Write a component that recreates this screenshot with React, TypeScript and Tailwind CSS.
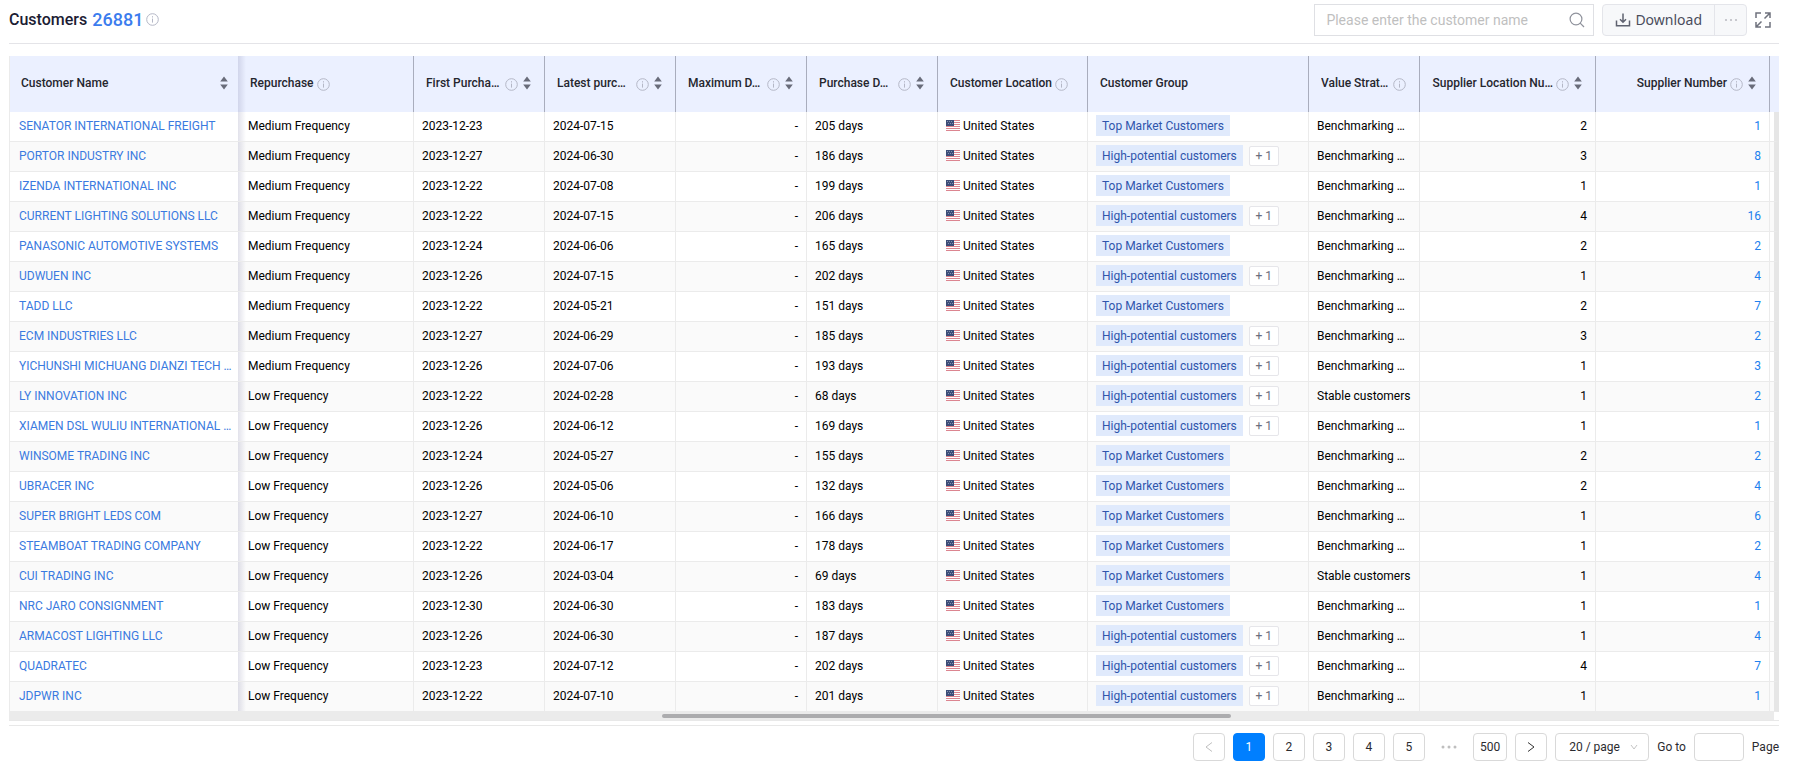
import { useState } from 'react'

type Row = {
  name: string
  freq: 'Medium' | 'Low'
  first: string
  latest: string
  days: number
  high: boolean
  value: string
  locations: number
  suppliers: number
}

const BENCH = 'Benchmarking …'
const STABLE = 'Stable customers'

const r = (
  name: string,
  freq: 'Medium' | 'Low',
  first: string,
  latest: string,
  days: number,
  high: boolean,
  locations: number,
  suppliers: number,
  value: string = BENCH,
): Row => ({ name, freq, first, latest, days, high, value, locations, suppliers })

const rows: Row[] = [
  r('SENATOR INTERNATIONAL FREIGHT', 'Medium', '2023-12-23', '2024-07-15', 205, false, 2, 1),
  r('PORTOR INDUSTRY INC', 'Medium', '2023-12-27', '2024-06-30', 186, true, 3, 8),
  r('IZENDA INTERNATIONAL INC', 'Medium', '2023-12-22', '2024-07-08', 199, false, 1, 1),
  r('CURRENT LIGHTING SOLUTIONS LLC', 'Medium', '2023-12-22', '2024-07-15', 206, true, 4, 16),
  r('PANASONIC AUTOMOTIVE SYSTEMS', 'Medium', '2023-12-24', '2024-06-06', 165, false, 2, 2),
  r('UDWUEN INC', 'Medium', '2023-12-26', '2024-07-15', 202, true, 1, 4),
  r('TADD LLC', 'Medium', '2023-12-22', '2024-05-21', 151, false, 2, 7),
  r('ECM INDUSTRIES LLC', 'Medium', '2023-12-27', '2024-06-29', 185, true, 3, 2),
  r('YICHUNSHI MICHUANG DIANZI TECH …', 'Medium', '2023-12-26', '2024-07-06', 193, true, 1, 3),
  r('LY INNOVATION INC', 'Low', '2023-12-22', '2024-02-28', 68, true, 1, 2, STABLE),
  r('XIAMEN DSL WULIU INTERNATIONAL …', 'Low', '2023-12-26', '2024-06-12', 169, true, 1, 1),
  r('WINSOME TRADING INC', 'Low', '2023-12-24', '2024-05-27', 155, false, 2, 2),
  r('UBRACER INC', 'Low', '2023-12-26', '2024-05-06', 132, false, 2, 4),
  r('SUPER BRIGHT LEDS COM', 'Low', '2023-12-27', '2024-06-10', 166, false, 1, 6),
  r('STEAMBOAT TRADING COMPANY', 'Low', '2023-12-22', '2024-06-17', 178, false, 1, 2),
  r('CUI TRADING INC', 'Low', '2023-12-26', '2024-03-04', 69, false, 1, 4, STABLE),
  r('NRC JARO CONSIGNMENT', 'Low', '2023-12-30', '2024-06-30', 183, false, 1, 1),
  r('ARMACOST LIGHTING LLC', 'Low', '2023-12-26', '2024-06-30', 187, true, 1, 4),
  r('QUADRATEC', 'Low', '2023-12-23', '2024-07-12', 202, true, 4, 7),
  r('JDPWR INC', 'Low', '2023-12-22', '2024-07-10', 201, true, 1, 1),
]

type Column = { title: string; info?: boolean; sort?: boolean; layout: 'fill' | 'start' | 'end' }

const columns: Column[] = [
  { title: 'Repurchase', info: true, layout: 'start' },
  { title: 'First Purcha…', info: true, sort: true, layout: 'fill' },
  { title: 'Latest purc…', info: true, sort: true, layout: 'fill' },
  { title: 'Maximum D…', info: true, sort: true, layout: 'fill' },
  { title: 'Purchase D…', info: true, sort: true, layout: 'fill' },
  { title: 'Customer Location', info: true, layout: 'start' },
  { title: 'Customer Group', layout: 'start' },
  { title: 'Value Strat…', info: true, layout: 'fill' },
  { title: 'Supplier Location Nu…', info: true, sort: true, layout: 'end' },
  { title: 'Supplier Number', info: true, sort: true, layout: 'end' },
]

function InfoIcon() {
  return (
    <svg viewBox="0 0 13 13" className="size-[13px] shrink-0 text-[#b4b7c6]" fill="none" stroke="currentColor" aria-hidden="true">
      <circle cx="6.5" cy="6.5" r="5.8" />
      <path d="M6.5 5.6v4M6.5 3.2v1.3" />
    </svg>
  )
}

function SortButton({ label }: { label: string }) {
  return (
    <button type="button" aria-label={`Sort by ${label}`} className="shrink-0 cursor-pointer">
      <svg viewBox="0 0 8 14" className="h-[14px] w-2 fill-[#696c7a]" aria-hidden="true">
        <path d="M4 0.6 7.8 5.4H0.2ZM4 13.4 0.2 8.6H7.8Z" />
      </svg>
    </button>
  )
}

function Flag() {
  return (
    <svg viewBox="0 0 14 11" className="h-[11px] w-[14px] shrink-0" aria-hidden="true">
      <path fill="#fff" d="M0 0h14v11H0z" />
      <path fill="#dc8590" d="M0 0h14v1H0zM0 2h14v1H0zM0 4h14v1H0zM0 6h14v1H0zM0 8h14v1H0zM0 10h14v1H0z" />
      <path fill="#3c4d78" d="M0 0h8v6H0z" />
      <path fill="#8490ae" d="M1 1h1v1H1zM3 1h1v1H3zM5 1h1v1H5zM2 3h1v1H2zM4 3h1v1H4zM6 3h1v1H6z" />
    </svg>
  )
}

function HeaderCell({ col }: { col: Column }) {
  const fill = col.layout === 'fill'
  return (
    <th scope="col" className="h-14 border-r border-[#a9adbd] bg-[#ebf0ff] pr-[13px] pb-[2px] pl-3 text-left font-medium text-[#25262e]">
      <div className={col.layout === 'end' ? 'flex items-center justify-end' : 'flex items-center'}>
        <span className={fill ? 'min-w-0 flex-1 overflow-hidden whitespace-nowrap' : 'whitespace-nowrap'}>{col.title}</span>
        {col.info && (
          <span className="pt-[2px] pl-[3px]">
            <InfoIcon />
          </span>
        )}
        {col.sort && (
          <span className="flex pl-[5px]">
            <SortButton label={col.title} />
          </span>
        )}
      </div>
    </th>
  )
}

const td = 'h-[30px] border-r border-b border-[#ebebeb] px-2 pb-[2px] whitespace-nowrap'
const fixedEdge =
  "sticky left-0 z-10 after:absolute after:inset-y-0 after:left-full after:w-2 after:bg-linear-to-r after:from-[#3c3c7826] after:to-transparent after:content-['']"
const pageBox = 'flex h-7 min-w-8 cursor-pointer items-center justify-center rounded border px-[6px]'

export default function App() {
  const [page, setPage] = useState(1)
  const [query, setQuery] = useState('')
  return (
    <main className="bg-white pr-4 pl-[9px] font-[Roboto,sans-serif] text-[12px] leading-[18px] text-black">
      <header className="flex h-11 items-center justify-between border-b border-[#e4e4e8] pb-1">
        <div className="flex items-center">
          <h1 className="text-[16px] font-medium text-[#1b1c33]">Customers</h1>
          <span className="pl-[5px] text-[18px] font-medium text-[#3b7cee]">26881</span>
          <span className="pl-[3px]">
            <InfoIcon />
          </span>
        </div>
        <div className="flex items-center gap-2">
          <div className="flex h-8 w-[280px] items-center border border-[#dfe0e4] pr-2 pl-[11px]">
            <input
              type="text"
              aria-label="Customer name"
              value={query}
              onChange={(e) => setQuery(e.target.value)}
              placeholder="Please enter the customer name"
              className="h-7 min-w-0 flex-1 text-[14px] leading-6 outline-none placeholder:text-[#bfbfbf]"
            />
            <svg viewBox="0 0 16 16" className="size-4" fill="none" stroke="#8f929c" strokeWidth="1.2" aria-hidden="true">
              <circle cx="7" cy="7" r="5.9" />
              <path d="m11.2 11.2 3.8 3.8" />
            </svg>
          </div>
          <div className="flex h-8 rounded-sm border border-[#e4e5ea] bg-[#f7f8fa] font-['Noto_Sans',sans-serif]">
            <button type="button" className="flex cursor-pointer items-center gap-1 px-3 text-[14px] text-[#4a4d5c]">
              <svg viewBox="0 0 16 16" className="size-4" fill="none" stroke="#5f6270" strokeWidth="1.5" aria-hidden="true">
                <path d="M1.5 8.500v5.200h13V8.500M8 1.500v8.400M5 7.200 8 10.200l3-3" />
              </svg>
              Download
            </button>
            <button type="button" aria-label="More actions" className="flex w-8 cursor-pointer items-center justify-center border-l border-[#e4e5ea]">
              <svg viewBox="0 0 14 4" className="h-1 w-[14px] fill-[#bcbdc4]" aria-hidden="true">
                <circle cx="2" cy="2" r="1.1" />
                <circle cx="7" cy="2" r="1.1" />
                <circle cx="12" cy="2" r="1.1" />
              </svg>
            </button>
          </div>
          <button type="button" aria-label="Full screen" className="mr-2 cursor-pointer">
            <svg viewBox="0 0 16 16" className="size-4" fill="none" stroke="#6f727d" strokeWidth="1.5" aria-hidden="true">
              <path d="M1 6V1h5M10 15h5v-5M9.5 6.5 15 1M10 1h5v5M6.500 9.500 1 15M1 10v5h5" />
            </svg>
          </button>
        </div>
      </header>

      <section className="pt-3">
        <div className="overflow-x-auto">
          <table className="w-full min-w-[1770px] table-fixed border-separate border-spacing-0 border-l border-[#ebebeb]">
            <colgroup>
              <col className="w-[228px]" />
              <col className="w-[176px]" />
              <col className="w-[131px]" />
              <col className="w-[131px]" />
              <col className="w-[131px]" />
              <col className="w-[131px]" />
              <col className="w-[150px]" />
              <col className="w-[221px]" />
              <col className="w-[111px]" />
              <col className="w-[176px]" />
              <col className="w-[174px]" />
              <col />
            </colgroup>
            <thead>
              <tr>
                <th scope="col" className={`${fixedEdge} h-14 bg-[#ebf0ff] pr-[10px] pb-[2px] pl-[11px] text-left font-medium text-[#25262e]`}>
                  <div className="flex items-center justify-between">
                    Customer Name
                    <SortButton label="Customer Name" />
                  </div>
                </th>
                {columns.map((c) => (
                  <HeaderCell key={c.title} col={c} />
                ))}
                <td className="bg-[#ebf0ff]" />
              </tr>
            </thead>
            <tbody>
              {rows.map((row) => (
                <tr key={row.name} className="bg-white even:bg-[#fafafa]">
                  <td className={`${fixedEdge} h-[30px] border-b border-[#ebebeb] bg-inherit pb-[2px] pl-[9px] whitespace-nowrap`}>
                    <a href="#customer" className="text-[#3a7ae0]">
                      {row.name}
                    </a>
                  </td>
                  <td className="h-[30px] border-r border-b border-[#ebebeb] pb-[2px] pl-[10px] whitespace-nowrap">{row.freq} Frequency</td>
                  <td className={td}>{row.first}</td>
                  <td className={td}>{row.latest}</td>
                  <td className={`${td} text-right`}>-</td>
                  <td className={td}>{row.days} days</td>
                  <td className={td}>
                    <div className="flex items-center gap-[3px]">
                      <Flag />
                      United States
                    </div>
                  </td>
                  <td className={td}>
                    <div className="flex items-center gap-[6px]">
                      <span className="flex h-[21px] items-center bg-[#e0eafc] px-[6px] text-[#2f55ac]">
                        {row.high ? 'High-potential customers' : 'Top Market Customers'}
                      </span>
                      {row.high && (
                        <button type="button" className="flex h-5 w-[30px] cursor-pointer items-center justify-center rounded-xs border border-[#e6e6ea] bg-white text-[#6b6e7d]">
                          + 1
                        </button>
                      )}
                    </div>
                  </td>
                  <td className={td}>{row.value}</td>
                  <td className={`${td} text-right`}>{row.locations}</td>
                  <td className={`${td} text-right`}>
                    <a href="#suppliers" className="text-[#2080ee]">
                      {row.suppliers}
                    </a>
                  </td>
                  <td className="border-r-[5px] border-b border-r-[#e6e6e6] border-b-[#ebebeb]" />
                </tr>
              ))}
            </tbody>
          </table>
        </div>
        <div className="mr-[5px] h-2 bg-[#ebebeb] py-[2px]">
          <div className="ml-[37%] h-1 w-[32.25%] rounded-xs bg-[#acacae]" />
        </div>
        <div className="h-[6px] border-y border-[#e8e8e8]" />
      </section>

      <nav aria-label="Pagination" className="flex items-center justify-end gap-2 pt-[7px] text-[#2b2b2f]">
        <button type="button" aria-label="Previous page" disabled className={`${pageBox} border-[#d9d9d9]`}>
          <svg viewBox="0 0 10 10" className="size-[10px]" fill="none" stroke="#bfbfbf" aria-hidden="true">
            <path d="M8 0.500 2 5l6 4.500" />
          </svg>
        </button>
        {[1, 2, 3, 4, 5].map((n) => (
          <button
            key={n}
            type="button"
            onClick={() => setPage(n)}
            className={page === n ? `${pageBox} border-[#007fff] bg-[#007fff] text-white` : `${pageBox} border-[#d9d9d9]`}
          >
            {n}
          </button>
        ))}
        <span className="flex w-8 justify-center">
          <svg viewBox="0 0 16 4" className="h-1 w-4 fill-[#bfbfbf]" aria-hidden="true">
            <circle cx="2" cy="2" r="1.500" />
            <circle cx="8" cy="2" r="1.500" />
            <circle cx="14" cy="2" r="1.500" />
          </svg>
        </span>
        <button type="button" onClick={() => setPage(500)} className={`${pageBox} border-[#d9d9d9]`}>
          500
        </button>
        <button type="button" aria-label="Next page" onClick={() => setPage(page + 1)} className={`${pageBox} border-[#d9d9d9]`}>
          <svg viewBox="0 0 10 10" className="size-[10px]" fill="none" stroke="#333" aria-hidden="true">
            <path d="m2 0.500 6 4.500-6 4.500" />
          </svg>
        </button>
        <div className="relative">
          <select aria-label="Rows per page" className="h-7 w-[94px] cursor-pointer appearance-none rounded border border-[#d9d9d9] bg-white pl-[13px]">
            <option>20 / page</option>
            <option>50 / page</option>
          </select>
          <svg viewBox="0 0 8 8" className="pointer-events-none absolute top-[10px] right-[11px] size-2" fill="none" stroke="#c4c4c4" aria-hidden="true">
            <path d="m1 2 3 4 3-4" />
          </svg>
        </div>
        <label className="flex items-center gap-2">
          Go to
          <input type="text" className="h-7 w-[50px] rounded border border-[#d9d9d9] px-1 outline-none" />
          Page
        </label>
      </nav>
    </main>
  )
}
